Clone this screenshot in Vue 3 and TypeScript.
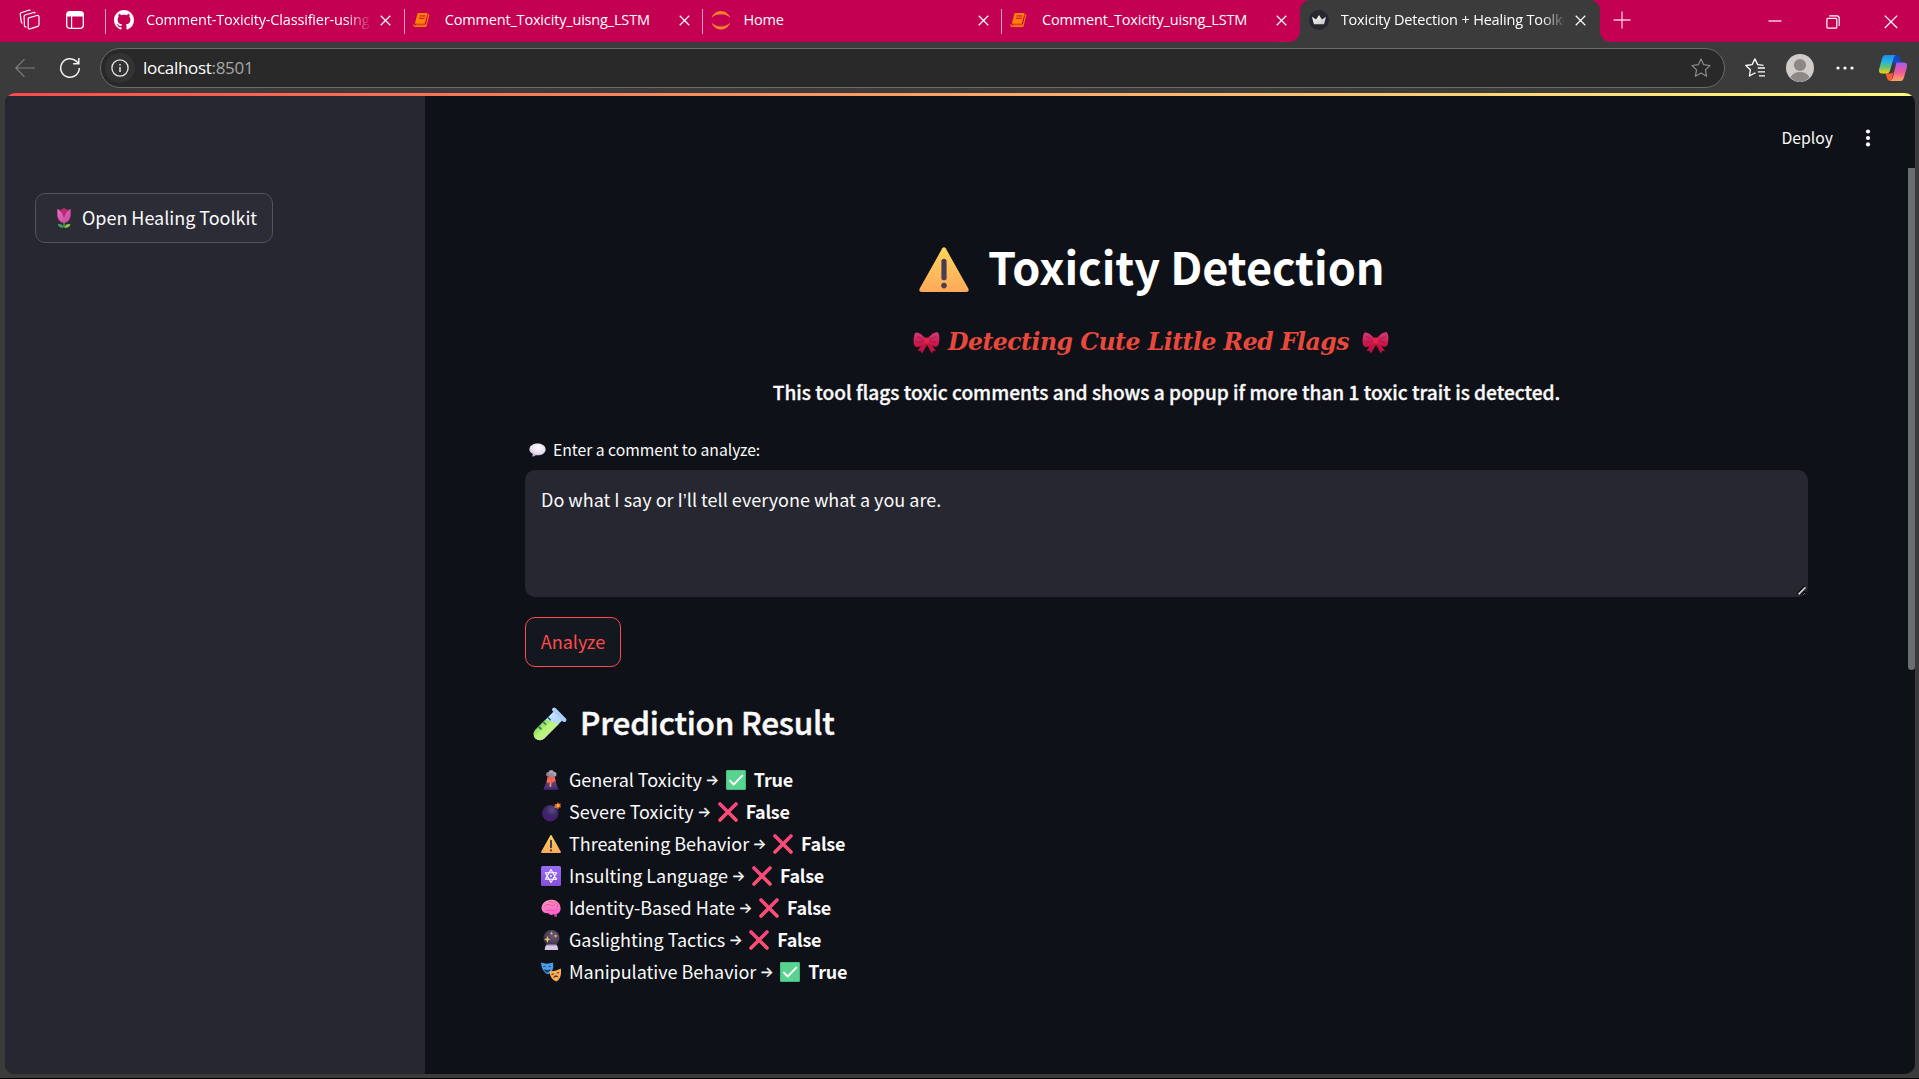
<script setup lang="ts">
interface Tab { title: string; icon: string; active?: boolean }
interface Result { icon: string; label: string; toxic: boolean }

const tabs: Tab[] = [
  { title: 'Comment-Toxicity-Classifier-using-LSTM', icon: 'github' },
  { title: 'Comment_Toxicity_uisng_LSTM', icon: 'book' },
  { title: 'Home', icon: 'jupyter' },
  { title: 'Comment_Toxicity_uisng_LSTM', icon: 'book' },
  { title: 'Toxicity Detection + Healing Toolkit', icon: 'crown', active: true },
]

const results: Result[] = [
  { icon: 'volcano', label: 'General Toxicity', toxic: true },
  { icon: 'bomb', label: 'Severe Toxicity', toxic: false },
  { icon: 'warning', label: 'Threatening Behavior', toxic: false },
  { icon: 'hexagram', label: 'Insulting Language', toxic: false },
  { icon: 'brain', label: 'Identity-Based Hate', toxic: false },
  { icon: 'crystal', label: 'Gaslighting Tactics', toxic: false },
  { icon: 'masks', label: 'Manipulative Behavior', toxic: true },
]
</script>

<template>
  <div class="window">
    <svg class="defs" aria-hidden="true">
      <defs>
        <linearGradient id="gWarn" x1="0" y1="0" x2="0" y2="1"><stop offset="0" stop-color="#ffd65c" /><stop offset="1" stop-color="#ffa85a" /></linearGradient>
        <linearGradient id="gBow" x1="0" y1="0" x2="0" y2="1"><stop offset="0" stop-color="#d63a78" /><stop offset="1" stop-color="#c40f3e" /></linearGradient>
        <linearGradient id="gTulip" x1="0" y1="0" x2="1" y2="1"><stop offset="0" stop-color="#f06cc4" /><stop offset="1" stop-color="#c9449c" /></linearGradient>
        <radialGradient id="gBubble" cx=".55" cy=".3" r=".75"><stop offset="0" stop-color="#fffcff" /><stop offset=".6" stop-color="#e9deee" /><stop offset="1" stop-color="#b9a4ca" /></radialGradient>
        <radialGradient id="gBomb" cx=".6" cy=".3" r=".75"><stop offset="0" stop-color="#5d4a86" /><stop offset=".5" stop-color="#3a2866" /><stop offset="1" stop-color="#53147a" /></radialGradient>
        <linearGradient id="gVolc" x1="0" y1="0" x2="0" y2="1"><stop offset="0" stop-color="#76506e" /><stop offset="1" stop-color="#43297c" /></linearGradient>
        <linearGradient id="gLava" x1="0" y1="0" x2="0" y2="1"><stop offset="0" stop-color="#ff4d4d" /><stop offset="1" stop-color="#ff9a56" /></linearGradient>
        <linearGradient id="gHex" x1="0" y1="0" x2="0" y2="1"><stop offset="0" stop-color="#9a6cf4" /><stop offset="1" stop-color="#8450d6" /></linearGradient>
        <linearGradient id="gBrain" x1="0" y1="0" x2=".4" y2="1"><stop offset="0" stop-color="#ff9db8" /><stop offset="1" stop-color="#fc63cf" /></linearGradient>
        <radialGradient id="gBall" cx=".6" cy=".35" r=".7"><stop offset="0" stop-color="#6a5a78" /><stop offset="1" stop-color="#383046" /></radialGradient>
        <linearGradient id="gCross" x1="0" y1="0" x2="0" y2="1"><stop offset="0" stop-color="#f9437e" /><stop offset="1" stop-color="#fb5170" /></linearGradient>
        <linearGradient id="gGlass" x1="0" y1="0" x2="1" y2="1"><stop offset="0" stop-color="#c9e6ff" /><stop offset="1" stop-color="#9ec7f6" /></linearGradient>
        <linearGradient id="gLiq" x1="0" y1="0" x2="1" y2="0"><stop offset="0" stop-color="#8fdc52" /><stop offset=".5" stop-color="#b9f47c" /><stop offset="1" stop-color="#c6f08c" /></linearGradient>
        <linearGradient id="gCop1" x1="0" y1="0" x2="0" y2="1"><stop offset="0" stop-color="#1c8ce8" /><stop offset=".35" stop-color="#22b3e0" /><stop offset=".65" stop-color="#64c27a" /><stop offset="1" stop-color="#f5d312" /></linearGradient>
        <linearGradient id="gCop2" x1="0" y1="0" x2="0" y2="1"><stop offset="0" stop-color="#a35cf0" /><stop offset=".5" stop-color="#f0569c" /><stop offset="1" stop-color="#ffa55c" /></linearGradient>
        <linearGradient id="gCrown" x1="0" y1="0" x2="1" y2="1"><stop offset="0" stop-color="#ffffff" /><stop offset="1" stop-color="#c4c4c8" /></linearGradient>
      </defs>

      <symbol id="github" viewBox="0 0 16 16"><path fill="#fff" d="M8 0C3.58 0 0 3.58 0 8c0 3.54 2.29 6.53 5.47 7.59.4.07.55-.17.55-.38 0-.19-.01-.82-.01-1.49-2.01.37-2.53-.49-2.69-.94-.09-.23-.48-.94-.82-1.13-.28-.15-.68-.52-.01-.53.63-.01 1.08.58 1.23.82.72 1.21 1.87.87 2.33.66.07-.52.28-.87.51-1.07-1.78-.2-3.64-.89-3.64-3.95 0-.87.31-1.59.82-2.15-.08-.2-.36-1.02.08-2.12 0 0 .67-.21 2.2.82.64-.18 1.32-.27 2-.27s1.36.09 2 .27c1.53-1.04 2.2-.82 2.2-.82.44 1.1.16 1.92.08 2.12.51.56.82 1.27.82 2.15 0 3.07-1.87 3.75-3.65 3.95.29.25.54.73.54 1.48 0 1.07-.01 1.93-.01 2.2 0 .21.15.46.55.38A8.01 8.01 0 0 0 16 8c0-4.42-3.58-8-8-8z" /></symbol>
      <symbol id="book" viewBox="0 0 20 20">
        <path fill="#ff8200" d="M5.5 2.3h9.8c.6 0 1 .5.8 1.1l-3.1 10.8H3.2c-.7 0-1.1-.6-.9-1.2L5 2.8z" />
        <path fill="none" stroke="#ff8200" stroke-width="1.2" stroke-linejoin="round" d="M16.2 3.9l1.3.8-2.9 11.5c-.1.5-.5.9-1 .9H2.4c-1.2 0-1.7-1.2-1.2-2.4M15 15.5H3" />
        <path stroke="#c40052" stroke-width="1.1" d="M7.2 5.5h6.6M6.5 8.1h6.6" />
      </symbol>
      <symbol id="jupyter" viewBox="0 0 20 20"><path fill="#f9822b" d="M.6 7.8C2 3.8 5.6 1 9.9 1s7.9 2.8 9.3 6.8C16.7 5.3 13.500 4.2 9.9 4.2S3.1 5.3.6 7.8zM.6 12.8c1.4 4 5 6.8 9.3 6.8s7.9-2.8 9.3-6.8c-2.5 2.5-5.7 3.6-9.3 3.6S3.1 15.3.6 12.8z" /></symbol>
      <symbol id="crown" viewBox="0 0 20 20"><circle cx="10" cy="10" r="10" fill="#262730" /><path fill="url(#gCrown)" d="M3 6.8l4 2.8L10 5l3 4.6 4-2.8-1.7 6.6c-.1.6-.6.9-1.1.9H5.8c-.6 0-1-.3-1.1-.9z" /></symbol>

      <symbol id="warning" viewBox="0 0 50 45"><path fill="url(#gWarn)" d="M23.3 1.3Q25-.8 26.7 1.3L49.3 41.5Q50.5 44.8 47.5 45H2.500Q-.5 44.8.7 41.5z" /><rect x="22.4" y="11.8" width="5.2" height="21.5" rx="2.6" fill="#4a3d50" /><circle cx="25" cy="38.6" r="2.8" fill="#4a3d50" /></symbol>
      <symbol id="bow" viewBox="0 0 27 22"><path fill="#c01242" d="M10.500 10L4.500 19l2.8-.3 1.700 2.900L14 13l4.800 8.600 1.300-2.900 3 .5L17 10z" /><path fill="url(#gBow)" d="M12.500 6.500Q6.500-.6 2.500.6-.2 3.900.8 11.500q.4 3.300 3 3.700 5-.4 8.700-4.500zM14.800 6.200Q20.500-.8 24.900.3q2.500 3.700.9 11.200-.6 3.200-3.300 3.400-4.700-.8-7.700-4.200z" /><path stroke="#95174a" stroke-width=".8" fill="none" d="M4 4.500l7.500 3.500M3.500 10.500l8-1.500M23.300 4.500l-7 3.500M23 10.500L16.500 9" /><rect x="11" y="5.500" width="5.300" height="6.300" rx="1.800" fill="#e52243" /></symbol>
      <symbol id="tulip" viewBox="0 0 20 20"><path d="M10 12v7" stroke="#579238" stroke-width="1.6" /><path fill="#3f9d65" d="M9.800 19.500Q5 20.500 3.600 16.200q4.600-1 6.200 3.300z" /><path fill="#8bc34d" d="M10.200 19.500q5 1 6.300-3.300-4.800-1-6.300 3.300z" /><path fill="#b92c6c" d="M6.300 1.700L10 0l3.700 1.700v8H6.300z" /><path fill="url(#gTulip)" d="M3.500.7Q8 3 10 10.200 12 3 16.500.7q1 8-1.500 11.500-2 2.600-5 2.600t-5-2.600Q2.500 8.700 3.500.7z" /></symbol>
      <symbol id="bubble" viewBox="0 0 20 16"><path fill="url(#gBubble)" d="M10 .4c5.500 0 9.600 3 9.600 6.900s-4.100 6.900-9.600 6.900c-.7 0-1.400 0-2-.1-1.300 1-3 1.500-4.600 1.400.9-.9 1.200-2 .9-3C1.900 11.200.4 9.400.4 7.300.4 3.400 4.500.4 10 .4z" /></symbol>
      <symbol id="tube" viewBox="0 0 36 36"><g transform="translate(-2 3) rotate(45 18 18)"><path fill="url(#gGlass)" d="M11.800 2h12.400v27.500a6.200 6.200 0 0 1-12.400 0z" /><path fill="url(#gLiq)" d="M11.800 15.500L24.200 9v20.500a6.200 6.200 0 0 1-12.400 0z" /><rect x="8.700" y="0" width="18.600" height="4.200" rx="2" fill="#a9d0fb" /><path stroke="#178067" stroke-width="1.600" d="M11.800 12h4M11.800 18.500h4M11.800 25h4" /></g></symbol>
      <symbol id="volcano" viewBox="0 0 20 20"><path fill="url(#gVolc)" d="M7.200 7.500h6l4.300 12.200H2.300z" /><path fill="url(#gLava)" d="M6.500 6.500h7.300l1 5.500-2-1.300-.8 2.600-1.300-2.700-.5 6.400-1.900-.6.500-5-1.600 1.700-1.500-1.200z" /><circle cx="7.500" cy="4.300" r="2.400" fill="#8e8798" /><circle cx="13" cy="4.300" r="2.500" fill="#a9a2ad" /><circle cx="10.300" cy="2.500" r="2.500" fill="#aaa3b0" /><circle cx="10.300" cy="5.300" r="2.200" fill="#958d9c" /></symbol>
      <symbol id="bomb" viewBox="0 0 20 20"><circle cx="9.300" cy="11.300" r="8.200" fill="url(#gBomb)" /><path stroke="#9a6a5a" stroke-width="1.300" fill="none" d="M13.500 5.500Q14.500 2.500 17 3" /><path fill="#e96a2c" d="M17 0l.8 1.800L20 1.500l-.8 2 1 1.800-2.200.2L17.200 7.500l-1.600-1.700-2.200.3.900-2-.9-2 2.200.1z" /><circle cx="17" cy="3.700" r="1.400" fill="#ffb04a" /></symbol>
      <symbol id="hexagram" viewBox="0 0 20 20"><rect width="20" height="20" rx="1.500" fill="url(#gHex)" /><path fill="none" stroke="#fff" stroke-width="1.100" stroke-linejoin="round" d="M10 3.500l5.600 9.700H4.400zM10 16.500L4.400 6.800h11.200z" /><circle cx="10" cy="10" r=".9" fill="#fff" /></symbol>
      <symbol id="brain" viewBox="0 0 20 20"><path fill="#d43ca9" d="M12.500 14l1 4.500 2.300.4V13z" /><path fill="url(#gBrain)" d="M.6 11C0 5.500 5 1.300 11 1.700c5 .3 8.700 4.300 8.600 8.600 0 3.900-2.600 6.200-6.600 5.700-1.800 1.500-4.500 1.200-5.600-.7C3.500 15.500 1 14 .6 11z" /><path fill="none" stroke="#e2559f" stroke-width=".9" stroke-linecap="round" d="M3 8.500q3-3.500 6-1.500 2 1.500 4.500 0M8 3.500q3 0 4.500 1.500M5 12.500q3.500-1.500 6 0t5-1.500M14.500 4.500q2.500 1.500 2.500 4.500" /></symbol>
      <symbol id="crystal" viewBox="0 0 20 20"><circle cx="10.500" cy="8" r="8" fill="url(#gBall)" /><path fill="#d8c8e6" d="M5.500 14.800h10q1.300 1.500 1.700 4.400.1.700-.6.700H4.300q-.7 0-.6-.7.400-2.900 1.800-4.400z" /><path fill="#a994bd" d="M5.500 14.800h10l.5.900H5z" /><path fill="#f5bd68" d="M6.400 5.700l.9 2.700 2.400.9-2.400.9-.9 2.700-.9-2.700-2.400-.9 2.400-.9zM10.500 1.500l.5 1.300 1.200.5-1.200.5-.5 1.300-.5-1.300-1.200-.5 1.200-.5zM14.800 4l.6 1.500 1.400.5-1.400.5-.6 1.500-.6-1.500-1.400-.5 1.400-.5z" /></symbol>
      <symbol id="masks" viewBox="0 0 20 20"><path fill="#4a9fee" d="M0 .6Q6 2.800 12 .6q1.500 9.500-5 11.700Q.8 10.500 0 .6z" /><path fill="none" stroke="#23436b" stroke-width="1" d="M2.300 4.800q1.300-1 2.500.1M7.500 4.900Q8.700 3.800 10 4.800" /><path fill="#1e3a68" d="M3 7.200q3.500 1.500 6.500 0-.5 3-3 3.200T3 7.200z" /><path fill="#ffb04f" d="M8.300 9Q14 10 19.800 6.600q1.300 9.400-4.300 12.900Q9.500 18.200 8.300 9z" /><path fill="none" stroke="#5c3544" stroke-width="1.100" d="M10.500 12q1.300.8 2.500-.3M15.700 11q1.300.3 2.300-.8" /><path fill="#5c3544" d="M12 16.300q.8-2.800 2.900-3 2-.1 2.600 2.100-2.600-1-5.500.9z" /></symbol>
      <symbol id="check" viewBox="0 0 20 20"><rect width="20" height="20" rx="1.200" fill="#42b883" /><rect x=".8" y=".8" width="18.200" height="18.200" rx=".8" fill="#58d490" /><path fill="none" stroke="#fff" stroke-width="1.900" stroke-linecap="round" stroke-linejoin="round" d="M4 10.600l3.700 3.900 8.600-8.800" /></symbol>
      <symbol id="cross" viewBox="0 0 20 20"><path stroke="url(#gCross)" stroke-width="3.600" stroke-linecap="round" d="M2 2l16 16M18 2L2 18" /></symbol>
      <symbol id="x" viewBox="0 0 12 12"><path stroke="currentColor" stroke-width="1.300" d="M.8.8l10.400 10.400M11.200.8L.8 11.200" /></symbol>
    </svg>

    <header class="strip">
      <div class="lead">
        <svg class="workspaces" viewBox="0 0 22 22" fill="none" stroke="#fff" stroke-width="1.2" stroke-linejoin="round"><path d="M9.800 8.800l8.200-2.300q2-.3 2 1.500v7.800q0 1.200-1.300 1.600L11 19.900q-1.800.4-1.800-1.300V9.900q0-.9.600-1.100zM5.400 15.700l-.3-8.400q0-1 .9-1.300l8.700-2.500q1.300-.2 1.500.8M2.300 12.800L1.200 5.200q-.1-1 .9-1.400L9.700 1.200q1.200-.3 1.600.7M7.500 18.200l-1.100-.3q-1.200-.5-1.200-2.200M3.500 14.300q-1-.3-1.200-1.500" /></svg>
        <svg class="vertical" viewBox="0 0 18 18"><rect x=".7" y=".7" width="16.600" height="16.600" rx="3" fill="none" stroke="#fff" stroke-width="1.300" /><path fill="#fff" d="M3.500.5h11a3 3 0 0 1 3 3V5.600H.5V3.500a3 3 0 0 1 3-3z" /><path stroke="#fff" stroke-width="1.200" d="M5.600 5v12.500" /></svg>
      </div>
      <nav class="tabs">
        <div v-for="(tab, i) in tabs" :key="i" class="tab" :class="{ active: tab.active }">
          <svg class="favicon" :class="tab.icon"><use :href="'#' + tab.icon" /></svg>
          <span class="tab-title">{{ tab.title }}</span>
          <svg class="tab-close"><use href="#x" /></svg>
        </div>
      </nav>
      <svg class="plus" viewBox="0 0 18 18"><path stroke="#f7c7da" stroke-width="1.300" d="M9 .5v17M.5 9h17" /></svg>
      <div class="controls">
        <svg viewBox="0 0 14 14"><path stroke="#fff" stroke-width="1.200" d="M.5 6h13" /></svg>
        <svg viewBox="0 0 14 14" fill="none" stroke="#fff" stroke-width="1.200"><rect x=".9" y="3.300" width="9.900" height="9.900" rx="1" /><path d="M3.200.9h7.600q2.400 0 2.400 2.400v7.600" /></svg>
        <svg viewBox="0 0 14 14"><path stroke="#fff" stroke-width="1.200" d="M.8.6l12.400 12.400M13.200.6L.8 13" /></svg>
      </div>
    </header>

    <div class="toolbar">
      <svg class="back" viewBox="0 0 20 20" fill="none" stroke="#808080" stroke-width="1.200"><path d="M20 10H.8M9.500 1.200L.8 10l8.700 8.800" /></svg>
      <svg class="reload" viewBox="0 0 22 22" fill="none" stroke="#f4f4f4" stroke-width="1.500"><path d="M20.300 11a9.300 9.300 0 1 1-2.700-6.600l2 2.200M19.800 1v5.700h-5.700" /></svg>
      <div class="address">
        <span class="info"><svg viewBox="0 0 18 18" fill="none" stroke="#e8e8e8" stroke-width="1.300"><circle cx="9" cy="9" r="8.100" /><path stroke-width="1.500" d="M9 8v5M9 5v1.600" /></svg></span>
        <span class="url">localhost<i>:8501</i></span>
        <svg class="star" viewBox="0 0 20 20" fill="none" stroke="#8d8d8d" stroke-width="1.200" stroke-linejoin="round"><path d="M10 .9l2.700 5.800 6.300.8-4.600 4.400 1.200 6.300L10 15.100l-5.600 3.100 1.200-6.300L1 7.500l6.300-.8z" /></svg>
      </div>
      <svg class="favorites" viewBox="0 0 20 20" fill="none" stroke="#fff" stroke-width="1.300" stroke-linejoin="round"><path d="M10.500 15.300L9.800 15l-5.400 3 1-6.200L.8 7.500l6.300-.9L9.900.9l2.800 5.700 5.800.7M12.800 10H20M12.800 13.900H20M14 17.800h6" /></svg>
      <svg class="avatar" viewBox="0 0 28 28"><circle cx="14" cy="14" r="14" fill="#cfccca" /><circle cx="14" cy="11" r="6.100" fill="#8d8886" /><path fill="#8d8886" d="M4.500 23.500Q7 18 14 18t9.500 5.500A14 14 0 0 1 14 28a14 14 0 0 1-9.500-4.500z" /></svg>
      <svg class="more" viewBox="0 0 18 4" fill="#fff"><circle cx="2" cy="2" r="1.600" /><circle cx="9" cy="2" r="1.600" /><circle cx="16" cy="2" r="1.600" /></svg>
      <svg class="copilot" viewBox="0 0 28 26"><path fill="#1546c8" d="M13 0h4.500q2.400 0 3.200 2.600L22 8h-5.500q-2 0-2.700 2z" /><path fill="#f4602e" d="M6.500 18.500H12q1.800 0 2.400-2L13 24q-.6 2-1.800 2-2.200 0-2.800-2z" /><path fill="url(#gCop1)" d="M6.500 0H17q-1.700.5-2.400 3L11 15.500q-.9 3-3.500 3H3Q-1 18.500.3 13.500L3 3.500Q4 0 6.500 0z" /><path fill="url(#gCop2)" d="M17.500 7.500H25q4 0 2.800 5L25 22.500Q24 26 21.500 26H11.200q1.800-.8 2.500-3l3-12.500q.4-2 .8-3z" /></svg>
    </div>

    <div class="viewport">
      <aside class="sidebar">
        <button class="btn toolkit"><svg><use href="#tulip" /></svg><span>Open Healing Toolkit</span></button>
      </aside>
      <main class="main">
        <div class="app-bar">
          <span class="deploy">Deploy</span>
          <svg viewBox="0 0 6 18" fill="#fafafa"><circle cx="3" cy="2.500" r="2.100" /><circle cx="3" cy="9" r="2.100" /><circle cx="3" cy="15.400" r="2.100" /></svg>
        </div>
        <section class="content">
          <h1><svg><use href="#warning" /></svg><span>Toxicity Detection</span></h1>
          <p class="tagline"><svg><use href="#bow" /></svg><span>Detecting Cute Little Red Flags</span><svg><use href="#bow" /></svg></p>
          <p class="desc">This tool flags toxic comments and shows a popup if more than 1 toxic trait is detected.</p>
          <div class="label"><svg><use href="#bubble" /></svg><span>Enter a comment to analyze:</span></div>
          <div class="textarea">Do what I say or I<span class="apos">’</span>ll tell everyone what a you are.
            <svg class="grip" viewBox="0 0 9 9"><path stroke="#0a0b0e" stroke-width="3.200" d="M0 9L8.500.5" /><path stroke="#0a0b0e" stroke-width="2" d="M5 9l3.500-3.500" /><path stroke="#d0d0d2" stroke-width="1.700" d="M1.500 8.300L8.500 1.300" /><path stroke="#d0d0d2" stroke-width="1" d="M6.500 8.500l1-1" /></svg>
          </div>
          <button class="btn analyze"><span>Analyze</span></button>
          <h2><svg><use href="#tube" /></svg><span>Prediction Result</span></h2>
          <ul class="results">
            <li v-for="r in results" :key="r.label">
              <svg class="emoji" :class="{ low: r.icon === 'warning' }"><use :href="'#' + r.icon" /></svg>
              <span class="name">{{ r.label }}</span>
              <span class="arrow">→</span>
              <svg class="emoji"><use :href="r.toxic ? '#check' : '#cross'" /></svg>
              <strong>{{ r.toxic ? 'True' : 'False' }}</strong>
            </li>
          </ul>
        </section>
        <div class="scrollbar"></div>
      </main>
      <div class="decoration"></div>
    </div>
  </div>
</template>

<style>
body { margin: 0; background: #3b3b3b; overflow: hidden; }
</style>

<style scoped>
* { box-sizing: border-box; }
svg { display: block; flex: none; }
.defs { position: absolute; width: 0; height: 0; }
.window {
  width: 1919px; height: 1079px; display: flex; flex-direction: column;
  background: #3b3b3b; border-bottom: 1px solid #000; overflow: hidden;
  font-family: "Noto Sans CJK SC", "Open Sans", sans-serif; color: #fafafa;
}

.strip { height: 42px; flex: none; display: flex; background: #c40052; }
.lead { width: 105px; flex: none; display: flex; padding-left: 19px; gap: 25px; }
.workspaces { width: 22px; height: 22px; margin-top: 9px; }
.vertical { width: 18px; height: 18px; margin-top: 11px; }
.tabs { display: flex; flex: none; }
.tab { width: 298.7px; display: flex; align-items: center; position: relative; padding: 0 12.5px 2px 9px; }
.tab::before { content: ""; position: absolute; left: 0; top: 9px; width: 1px; height: 25px; background: #ec9fbd; }
.favicon { width: 20px; height: 20px; }
.favicon.book { width: 18px; height: 18px; margin-right: 2px; }
.tab-title {
  flex: 1; margin: -1px 11px 0 12px; overflow: hidden; white-space: nowrap; line-height: 24px;
  font-family: "Open Sans", sans-serif; font-size: 14.5px; letter-spacing: -0.17px; color: #fff;
}
.tab:first-child .tab-title, .active .tab-title { mask-image: linear-gradient(to right, #000 200px, transparent 226px); }
.tab-close { width: 11px; height: 11px; color: #fff; margin-top: 1px; }
.tab.active { width: 300px; background: #3b3b3b; border-radius: 10px 10px 0 0; padding-right: 14px; }
.tab.active::before, .tab.active::after {
  content: ""; position: absolute; top: auto; bottom: 0; width: 10px; height: 10px;
}
.tab.active::before { left: -10px; background: radial-gradient(circle at 0 0, transparent 9.5px, #3b3b3b 10px); }
.tab.active::after { right: -10px; background: radial-gradient(circle at 100% 0, transparent 9.5px, #3b3b3b 10px); }
.plus { width: 18px; height: 18px; margin: 11px 0 0 13px; }
.controls { margin: 15px 21px 0 auto; display: flex; gap: 44px; }
.controls svg { width: 14px; height: 14px; }

.toolbar { height: 51px; flex: none; display: flex; align-items: center; padding: 0 12px 0 15px; }
.back { width: 20px; height: 20px; }
.reload { width: 22px; height: 22px; margin-left: 24px; }
.address {
  width: 1625px; height: 40px; flex: none; margin-left: 19px; display: flex; align-items: center;
  background: #292929; border: 1px solid #6b6b6b; border-radius: 20px; padding: 0 13px 0 4px;
}
.info { width: 30px; height: 30px; border-radius: 50%; background: #333; display: flex; align-items: center; justify-content: center; }
.info svg { width: 18px; height: 18px; }
.url { margin-left: 8px; font-family: "Open Sans", sans-serif; font-size: 17px; letter-spacing: -0.3px; line-height: 24px; color: #fff; flex: 1; }
.url i { font-style: normal; color: #a6a6a6; }
.star { width: 20px; height: 20px; }
.favorites { width: 20px; height: 20px; margin-left: 20px; }
.avatar { width: 28px; height: 28px; margin-left: 21px; }
.more { width: 18px; height: 4px; margin-left: 22px; }
.copilot { width: 28px; height: 26px; margin-left: 25px; }

.viewport {
  flex: none; width: 1910px; height: 981px; margin-left: 5px; position: relative; display: flex;
  border-radius: 10px; overflow: hidden; background: #0e1117;
}
.decoration { position: absolute; left: 0; top: 0; right: 0; height: 3px; background: linear-gradient(90deg, #ff4b4b, #fffd80); }
.sidebar { width: 420px; flex: none; background: #262730; padding: 100px 0 0 30px; }
.btn {
  height: 50px; display: flex; align-items: center; border-radius: 10px; padding: 0 0 2px;
  font: 400 18px/30px "Noto Sans CJK SC", sans-serif; color: #fafafa;
}
.toolkit { width: 238px; background: #2b2c36; border: 1px solid #52535b; padding-left: 18px; letter-spacing: -0.03px; }
.toolkit svg { width: 20px; height: 20px; margin: 1px 8px 0 0; }
.main { flex: 1; position: relative; }
.app-bar { height: 90px; display: flex; align-items: center; justify-content: flex-end; padding-right: 44px; }
.deploy { font-size: 15.75px; line-height: 24px; margin-right: 32px; }
.app-bar svg { width: 6px; height: 18px; }
.content { padding-left: 100px; width: 1383px; }
h1, h2, p, ul { margin: 0; padding: 0; font-weight: 400; }
h1 { display: flex; align-items: center; height: 60px; margin: 53px 0 0 394px; font-size: 45px; font-weight: 700; line-height: 60px; letter-spacing: -0.05px; color: #fff; white-space: nowrap; }
h1 svg { width: 50px; height: 45px; margin: 7px 19px 0 0; }
.tagline {
  display: flex; align-items: center; height: 40px; margin: 26px 0 0 388px; white-space: nowrap;
  font: italic 700 23.5px/40px "DejaVu Serif", serif; letter-spacing: -0.47px; color: #e8493c;
}
.tagline svg { width: 27px; height: 22px; margin-top: 1px; }
.tagline span { margin: 0 13px 0 8px; }
.desc { margin-top: 15px; height: 30px; line-height: 30px; font-size: 19.1px; font-weight: 500; text-align: center; white-space: nowrap; -webkit-text-stroke: 0.35px #fafafa; }
.label { margin-top: 31px; height: 24px; display: flex; align-items: center; font-size: 15.75px; line-height: 24px; padding-left: 4px; }
.label span { letter-spacing: -0.04px; }
.label svg { width: 17px; height: 14px; margin-right: 7px; }
.textarea { position: relative; margin-top: 8px; height: 127px; border-radius: 10px; background: #262730; padding: 14px 16px; font-size: 18px; line-height: 30px; }
.apos { font-family: "Liberation Sans", sans-serif; }
.grip { position: absolute; right: 2px; bottom: 2px; width: 9px; height: 9px; }
.analyze { width: 96px; margin-top: 20px; justify-content: center; background: #131720; border: 1px solid #ff4b4b; color: #ff4b4b; }
h2 { display: flex; align-items: center; height: 44px; margin-top: 32px; font-size: 31.5px; font-weight: 500; line-height: 44px; letter-spacing: -0.2px; padding-left: 7px; -webkit-text-stroke: 0.5px #fafafa; }
h2 svg { width: 36px; height: 36px; margin: 3px 12px 0 0; }
.results { list-style: none; margin-top: 20px; padding-left: 16px; }
.results li { display: flex; align-items: center; height: 32px; font-size: 18px; line-height: 32px; }
.emoji { width: 20px; height: 20px; margin-top: 1px; }
.emoji.low { margin-top: 2px; }
.name { margin-left: 8px; letter-spacing: -0.03px; }
.arrow { width: 13px; margin: 1px 7.5px 0 3.5px; font-family: Inter, sans-serif; font-size: 14.5px; text-align: center; -webkit-text-stroke: 0.25px #fafafa; }
.results strong { margin-left: 8px; font-weight: 700; letter-spacing: -0.3px; }
.scrollbar { position: absolute; right: 0; top: 75px; width: 7px; height: 502px; background: #6c6d72; border-radius: 0 0 4px 4px; }
</style>
